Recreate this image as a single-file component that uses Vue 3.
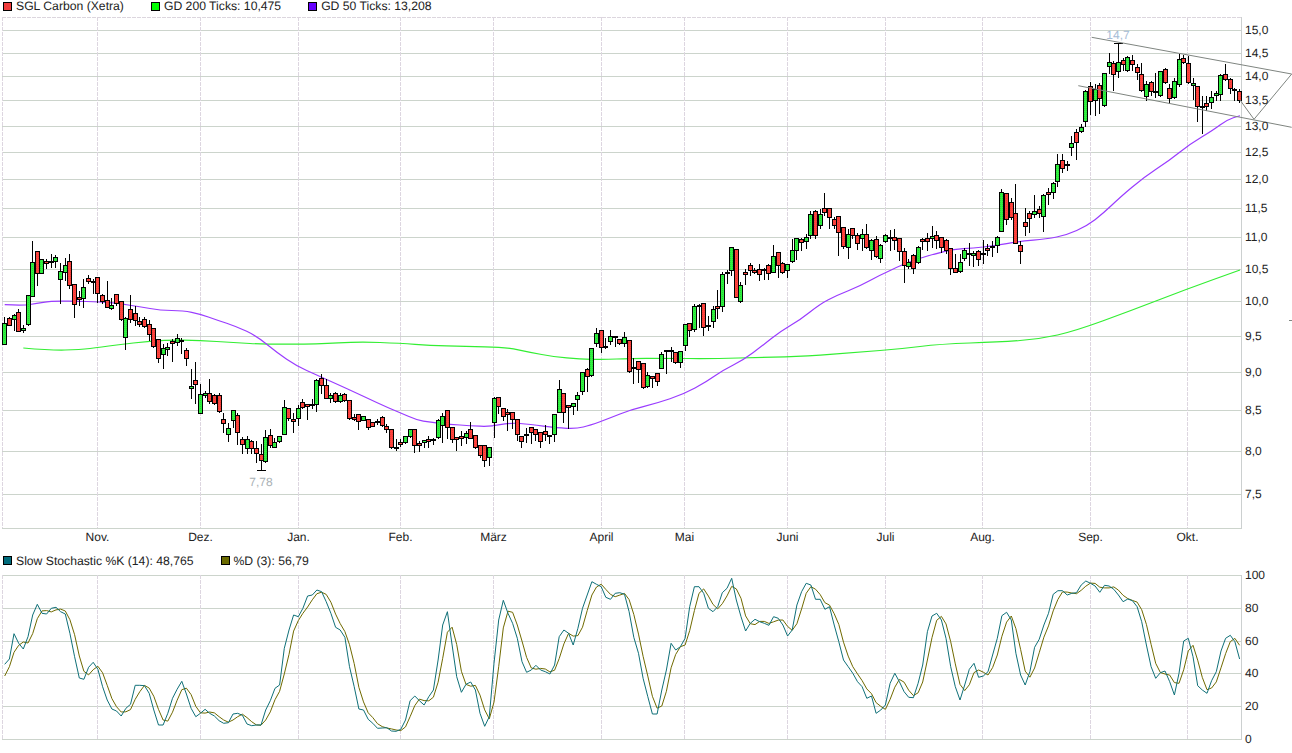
<template>
  <div class="page">
    <div class="legend">
      <span class="item"><i class="box red"></i>SGL Carbon (Xetra)</span>
      <span class="item"><i class="box lime"></i>GD 200 Ticks: 10,475</span>
      <span class="item"><i class="box violet"></i>GD 50 Ticks: 13,208</span>
    </div>

    <svg class="chart" width="1292" height="541" viewBox="0 12 1292 541">
      <defs>
        <pattern id="redDots" width="2" height="2" patternUnits="userSpaceOnUse">
          <rect width="2" height="2" fill="#ff423c" />
          <rect width="1" height="1" fill="#e63c38" />
        </pattern>
        <pattern id="greenDots" width="2" height="2" patternUnits="userSpaceOnUse">
          <rect width="2" height="2" fill="#30f040" />
          <rect width="1" height="1" fill="#28d636" />
        </pattern>
      </defs>
      <g class="grid">
        <line v-for="y in priceRows" :key="y" x1="2" :x2="axisX" :y1="y + 0.5" :y2="y + 0.5" />
        <line x1="2" :x2="axisX" y1="528.5" y2="528.5" />
      </g>
      <line class="top-edge" x1="2" :x2="axisX" y1="17.5" y2="17.5" />
      <g class="grid-v">
        <line x1="2.5" x2="2.5" y1="17" y2="528" />
        <line v-for="m in months" :key="m.label" :x1="m.x + 0.5" :x2="m.x + 0.5" y1="17" y2="528" />
      </g>
      <line class="axis" :x1="axisX + 0.5" :x2="axisX + 0.5" y1="17" y2="529" />

      <path class="ma200" :d="ma200" />
      <path class="ma50" :d="ma50" />

      <g v-for="c in candles" :key="c.i">
        <line class="wick" :x1="c.x" :x2="c.x" :y1="c.high" :y2="c.low" />
        <rect :class="c.up ? 'up' : 'down'" :x="c.x - 2" :y="c.top" width="4" :height="c.h" />
      </g>
      <line class="wick" x1="1114" x2="1123" y1="43.5" y2="43.5" />
      <line class="wick" x1="257" x2="266" y1="470.5" y2="470.5" />

      <polyline class="trend" points="1091.7,37.3 1291.7,74 1254,119.3 1240,100" />
      <line class="trend" x1="1078.3" y1="85.7" x2="1291.7" y2="127.3" />
      <line class="trend" x1="1289" y1="320.5" x2="1292" y2="320.5" />

      <text class="extreme grey" x="261" y="486" text-anchor="middle">7,78</text>
      <text class="extreme blue" x="1118" y="39" text-anchor="middle">14,7</text>

      <text v-for="p in priceLabels" :key="p.label" class="tick" x="1245" :y="p.y + 4">{{ p.label }}</text>
      <text v-for="m in months" :key="m.label" class="tick" :x="m.x + 0.5" y="541" text-anchor="middle">{{ m.label }}</text>
    </svg>

    <div class="legend lower">
      <span class="item"><i class="box teal"></i>Slow Stochastic %K (14): 48,765</span>
      <span class="item"><i class="box olive"></i>%D (3): 56,79</span>
    </div>

    <svg class="chart" width="1292" height="185" viewBox="0 568 1292 185">
      <g class="grid">
        <line v-for="s in stochLabels" :key="s.label" x1="2" :x2="axisX" :y1="s.y + 0.5" :y2="s.y + 0.5" />
      </g>
      <g class="grid-v">
        <line x1="2.5" x2="2.5" y1="575" y2="739" />
        <line v-for="m in months" :key="m.label" :x1="m.x + 0.5" :x2="m.x + 0.5" y1="575" y2="739" />
      </g>
      <line class="axis" :x1="axisX + 0.5" :x2="axisX + 0.5" y1="575" y2="740" />
      <polyline class="slow-d" :points="lineD" />
      <polyline class="slow-k" :points="lineK" />
      <text v-for="s in stochLabels" :key="s.label" class="tick" x="1245" :y="s.y + 4">{{ s.label }}</text>
    </svg>
  </div>
</template>

<script setup>
const axisX = 1241;
const candleX = (i) => 4.7 + 4.66 * i;

const months = [
  { label: "Nov.", x: 97 },
  { label: "Dez.", x: 200 },
  { label: "Jan.", x: 298 },
  { label: "Feb.", x: 400 },
  { label: "März", x: 493 },
  { label: "April", x: 601 },
  { label: "Mai", x: 684 },
  { label: "Juni", x: 787 },
  { label: "Juli", x: 885 },
  { label: "Aug.", x: 982 },
  { label: "Sep.", x: 1090 },
  { label: "Okt.", x: 1187 },
];

const priceLabels = [
  ["15,0", 30], ["14,5", 53], ["14,0", 76], ["13,5", 100], ["13,0", 126], ["12,5", 152],
  ["12,0", 179], ["11,5", 208], ["11,0", 237], ["10,5", 269], ["10,0", 301], ["9,5", 336],
  ["9,0", 372], ["8,5", 410], ["8,0", 451], ["7,5", 494],
].map(([label, y]) => ({ label, y }));
const priceRows = priceLabels.map((p) => p.y);

const stochLabels = [
  ["100", 575], ["80", 608], ["60", 641], ["40", 673], ["20", 706], ["0", 739],
].map(([label, y]) => ({ label, y }));

// candles: up, high, top, bottom, low - y values read off the 3x crops, so each block has its own offset
const blocks = [
  { off: 230, rows: [
    [1,258,278,343,343],[0,258,263,284,286],[1,250,256,268,300],[0,235,247,302,304],[1,282,295,301,305],
    [1,192,196,281,284],[1,30,97,199,199],[0,64,64,130,165],[1,85,88,130,130],[0,85,92,100,115],
    [0,70,92,96,110],[1,72,82,94,110],[1,95,124,146,218],[1,82,106,127,150],[0,70,92,166,175],
    [0,160,163,223,260],[0,180,202,208,225],[1,145,172,203,232],[0,132,145,154,158],[0,145,153,157,190],
    [0,140,142,190,215],[0,190,194,212,220],[0,150,211,232,232],[1,200,226,235,236],[0,192,193,218,225],
    [0,212,214,268,270],[1,258,263,322,357],[0,192,236,268,275],[0,225,250,269,285],[0,258,272,283,287],
    [0,258,268,289,292],[0,268,283,311,330],[0,290,295,349,352],[0,325,328,385,395],[1,340,355,373,413],
    [1,335,350,358,375],[0,325,332,340,392],[1,310,323,337,345],[1,320,329,334,370],[0,350,361,385,405],
    [1,415,469,475,503],[0,393,449,461,520],[1,460,493,550,550],[1,480,490,496,500],[0,445,488,514,518],
    [0,490,496,520,522],[0,485,496,544,546],[0,545,568,580,607],[1,575,595,613,632],[1,540,541,570,590],
    [0,546,555,607,642],[0,618,628,642,668],[1,615,628,655,670],[0,628,634,654,668],[0,630,654,670,697],
    [0,640,673,689,721],[1,597,620,694,695],[0,595,616,645,652],[1,620,637,650,650],[1,617,619,634,635],
    [1,507,532,613,613],[0,533,535,565,570],[0,545,568,574,605],[1,523,535,565,585],[0,503,517,532,535],
    [0,518,523,528,567],[0,505,521,524,535],[1,445,451,523,542],[0,430,445,466,488],[0,445,466,503,503],
    [1,485,494,505,515],[0,483,490,512,517],[1,487,494,513,515],[0,485,493,511,512],[0,510,511,565,567],
    [0,550,562,566,570],[0,550,553,573,597],[1,558,559,569,570],[0,565,568,590,596],[0,572,577,587,588],
    [0,563,572,577,582],[0,556,561,586,588],[0,578,587,598,605],[0,598,598,652,655],[0,625,650,652,660],
    [0,625,637,643,648],[1,617,619,637,640],[1,595,598,619,620],[0,597,597,646,665],[0,630,640,646,662],
    [1,628,629,637,650],[0,615,628,633,650],
    [0,622,627,629,643],[1,565,569,620,625],[1,545,559,586,636],[0,538,541,590,625],[0,590,592,628,636],
    [0,622,622,627,660],[0,600,619,625,645],[1,600,610,620,640],[0,574,598,623,625],[0,615,616,650,653],
    [0,643,645,674,680],[0,643,644,689,708],[1,650,652,682,705],[1,498,505,577,620],[0,498,502,527,550],
    [0,533,535,557,570],[0,535,547,552,600],[0,545,547,568,595],[0,567,568,613,630],[0,617,619,632,650],
    [0,590,612,614,637],[0,588,590,605,640],[0,595,598,612,630],[0,605,607,632,650],[0,583,604,613,630],
    [0,612,616,619,640],[1,552,553,613,632],[1,448,478,545,546],[0,488,490,545,575],[0,524,526,531,595],
    [1,518,519,529,553],[1,482,496,508,540],[1,425,427,482,492],[0,410,416,439,484],[1,354,355,436,437],
    [1,292,310,340,348],[0,300,301,352,365],[0,320,347,350,353],[1,297,319,334,342],[0,318,318,320,348],
    [0,325,328,340,342],[1,303,322,340,347],[0,330,331,422,425],[0,380,411,413,460],[0,392,394,418,455],
    [0,399,400,472,473],[1,423,436,467,472],[0,435,439,444,470],[0,429,430,454,465],[1,362,373,413,415],
    [0,360,361,364,428],[0,348,361,364,393],[0,365,367,397,400],[1,360,364,395,410],[1,278,283,346,360],
    [0,278,280,301,318],[1,220,229,298,302],[0,218,224,227,290],[0,219,220,292,314],[0,255,284,287,300],
    [1,225,238,272,290],[0,178,229,233,265],[1,122,133,227,242],[0,118,125,128,158],[1,51,52,119,135],
    [0,56,58,200,200],[1,153,166,214,215],[0,115,127,131,163],[0,97,106,119,135],[0,110,119,127,130],
    [0,100,116,131,150],[0,112,118,121,146],[0,100,106,130,147],[1,43,79,127,127],[0,67,67,106,142],
    [0,93,100,127,130],[1,98,103,119,140],[1,25,61,94,97],[1,20,25,61,88],[0,20,28,37,60],
    [1,10,22,34,55],[1,-60,-47,15,23],[0,-63,-56,15,23],[1,-65,-49,-14,-7],[0,-115,-65,-55,-45],
    [0,-67,-65,-38,-5],[0,-43,-32,-14,-5],[0,-45,-43,5,75],[0,-10,-8,49,55],[1,-5,13,52,83],
    [0,-5,-5,16,25],[0,5,16,40,58],
  ] },
  { off: 20, rows: [
    [1,625,643,655,690],[0,610,643,680,685],[1,655,661,690,718],[0,645,658,708,712],[1,670,676,714,725],
    [1,640,644,663,665],[0,627,652,655,690],[0,625,650,660,688],[0,652,653,694,720],[0,680,692,735,785],
    [1,715,725,737,745],[0,700,706,745,758],[1,676,682,726,728],[0,650,658,664,688],[0,635,654,664,690],
    [1,615,648,653,680],[0,630,644,660,685],[0,650,652,682,695],[0,655,661,690,700],[0,683,685,745,762],
    [0,700,743,755,757],[1,700,727,752,755],[1,680,691,715,720],[0,665,698,702,735],[1,690,698,706,738],
    [0,688,694,718,735],[1,658,698,703,730],[0,668,685,689,705],[0,660,679,682,708],[1,645,652,674,695],
    [1,503,517,634,634],[0,518,520,597,612],[0,530,547,590,598],[0,490,580,669,670],[0,660,676,694,728],
    [0,560,606,617,645],[0,570,580,595,637],[1,522,572,583,590],[0,555,566,580,590],[1,520,526,589,632],
    [0,500,517,523,552],[1,482,490,517,535],[1,400,431,484,497],[0,400,421,443,455],[0,420,433,436,450],
    [1,345,370,382,405],[0,325,335,367,417],[1,310,320,332,335],[1,208,212,304,318],[0,184,199,243,283],
    [1,190,206,241,285],[0,187,196,233,278],[1,155,160,256,258],[1,96,127,137,160],[0,120,128,163,210],
    [1,70,127,152,172],[0,110,121,132,150],[1,105,112,151,152],[0,103,121,133,150],[0,130,142,157,178],
    [0,126,163,211,214],[1,180,191,228,240],[0,180,187,213,225],[0,155,213,217,230],[1,150,152,226,228],
    [0,140,148,186,188],[0,190,203,233,250],[1,170,184,232,233],[1,100,118,193,197],[0,103,115,127,130],
    [0,105,130,187,188],[1,172,190,196,236],[0,197,199,259,303],[1,225,258,262,338],[0,225,248,259,270],
    [1,210,232,245,263],[1,210,220,226,240],[1,160,166,223,240],[0,130,163,176,180],[0,170,176,205,218],
    [0,200,206,208,240],[0,205,212,241,245],
  ] },
];

const candles = [];
for (const block of blocks) {
  for (const [up, high, top, bottom, low] of block.rows) {
    const i = candles.length;
    const px = (v) => Math.round(block.off + v / 3) + 0.5;
    candles.push({
      i,
      up,
      x: Math.floor(candleX(i)) + 0.5,
      high: px(high),
      low: px(low),
      top: px(top),
      h: Math.max(px(bottom) - px(top), 1),
    });
  }
}

// curves traced from the crops: [offset x, offset y, [zoomX, zoomY]...]
const trace = (parts) =>
  parts.flatMap(([ox, oy, pts]) => pts.map(([x, y]) => [ox + x / 3, oy + y / 3]));

// round the corners of a traced curve, going through the midpoints
const smooth = (pts) => {
  const f = (n) => n.toFixed(1);
  let d = `M${f(pts[0][0])} ${f(pts[0][1])}`;
  for (let i = 1; i < pts.length - 1; i++) {
    const mx = (pts[i][0] + pts[i + 1][0]) / 2;
    const my = (pts[i][1] + pts[i + 1][1]) / 2;
    d += `Q${f(pts[i][0])} ${f(pts[i][1])} ${f(mx)} ${f(my)}`;
  }
  const last = pts[pts.length - 1];
  return d + `L${f(last[0])} ${f(last[1])}`;
};

const ma50 = smooth(trace([
  [0, 230, [[14,224],[70,227],[110,220],[150,214],[220,213],[300,216],[350,220],[420,230],[480,241],[550,242],[600,252],[650,270],[710,290],[770,318],[830,367],[890,408],[950,435],[1050,480],[1130,518],[1200,548],[1250,570],[1290,577]]],
  [430, 230, [[60,583],[120,587],[180,590],[240,578],[300,583],[380,594],[440,596],[480,586],[540,564],[600,540],[680,520],[760,493],[830,455],[880,420],[940,390],[1000,345],[1050,305],[1110,270],[1170,222],[1220,196],[1290,168]]],
  [860, 20, [[60,765],[130,733],[170,718],[230,700],[280,688],[340,684],[400,678],[480,664],[560,657],[620,645],[680,618],[730,580],[780,532],[850,473],[930,420],[990,372],[1060,330],[1100,300],[1140,287]]],
]));

const ma200 = smooth(trace([
  [0, 230, [[70,354],[150,361],[240,359],[300,352],[400,338],[500,330],[600,331],[700,338],[800,343],[950,342],[1080,335],[1200,340],[1290,346]]],
  [430, 230, [[100,349],[230,352],[300,367],[370,380],[450,387],[520,389],[600,385],[700,385],[850,386],[1000,382],[1130,379],[1290,366]]],
  [0, 0, [[2700,1047],[2820,1032],[3000,1026],[3120,1017],[3225,993],[3390,933],[3561,867],[3720,810]]],
]));

// %K per candle, y in the 3x crop of the lower panel
const slowK = [
  343,327,251,280,297,260,195,163,190,192,
  175,172,185,192,250,320,384,388,352,337,
  358,410,450,477,483,498,475,463,406,406,
  407,430,480,525,525,490,445,418,394,432,
  475,500,490,478,490,498,512,520,518,492,
  490,496,522,527,525,525,480,452,415,405,
  295,240,195,200,175,138,135,120,125,155,
  190,232,240,262,350,410,477,480,508,520,
  535,534,533,543,544,538,510,452,438,452,
  465,440,
  420,330,225,185,285,380,427,403,396,420,
  490,529,500,340,210,151,190,220,265,335,
  367,360,346,360,365,372,345,260,240,250,
  285,235,175,135,95,103,110,142,148,130,
  128,133,185,262,310,385,440,492,492,420,
  360,280,300,290,265,170,110,110,130,175,
  185,170,128,115,85,150,200,243,220,208,
  215,220,226,200,205,225,258,240,165,125,
  100,105,148,148,178,170,225,275,330,350,
  370,395,
  410,445,438,490,480,465,400,370,395,425,
  442,443,400,345,245,198,190,210,265,350,
  410,450,405,358,340,382,378,365,315,265,
  197,187,210,310,375,405,365,292,268,225,
  190,133,122,122,135,130,128,105,93,100,
  108,127,106,108,118,135,155,147,152,170,
  215,285,350,385,368,363,395,435,370,273,
  265,320,407,420,430,392,365,303,265,256,
  275,327,
];

// %D is the 3 day average of %K
const slowD = slowK.map((v, i) => {
  if (i === 0) return 378;
  if (i === 1) return 350;
  return (v + slowK[i - 1] + slowK[i - 2]) / 3;
});

const toLine = (vals) =>
  vals.map((v, i) => `${candleX(i).toFixed(1)},${(550 + v / 3).toFixed(1)}`).join(" ");
const lineK = toLine(slowK);
const lineD = toLine(slowD);
</script>

<style scoped>
.page {
  width: 1292px;
  height: 753px;
  overflow: hidden;
  background: #fff;
  font-family: "Liberation Sans", Arial, sans-serif;
  color: #222;
  text-rendering: geometricPrecision;
}
.legend {
  display: flex;
  align-items: center;
  gap: 27px;
  height: 12px;
  padding-left: 3px;
  font-size: 12.2px;
  white-space: nowrap;
}
.lower {
  height: 15px;
}
.item {
  display: flex;
  align-items: center;
  gap: 4px;
}
.box {
  display: block;
  width: 7px;
  height: 7px;
  border: 1px solid #000;
}
.red { background: #f03c3c; }
.lime { background: #00ff00; }
.violet { background: #6600ff; }
.teal { background: #006b7b; }
.olive { background: #6b6b00; }

.chart {
  display: block;
}
.grid line {
  stroke: #ccd4cc;
  stroke-width: 1;
  shape-rendering: crispEdges;
}
.top-edge {
  stroke: #dcd6de;
  stroke-dasharray: 4 1;
  shape-rendering: crispEdges;
}
.grid-v line {
  stroke: #ddd6e0;
  stroke-dasharray: 4 1;
  shape-rendering: crispEdges;
}
.axis {
  stroke: #ccd0d0;
  shape-rendering: crispEdges;
}
polyline,
path {
  fill: none;
}
.ma50 {
  stroke: #9a3cff;
  stroke-width: 1.2;
}
.ma200 {
  stroke: #33ee33;
  stroke-width: 1.2;
}
.wick {
  stroke: #000;
  stroke-width: 1;
  shape-rendering: crispEdges;
}
.up,
.down {
  stroke: #000;
  stroke-width: 1;
  shape-rendering: crispEdges;
}
.up { fill: url(#greenDots); }
.down { fill: url(#redDots); }
.trend {
  fill: none;
  stroke: #7f8580;
  stroke-width: 1;
}
.slow-k {
  stroke: #0f7078;
  stroke-width: 1;
}
.slow-d {
  stroke: #706a00;
  stroke-width: 1;
}
.tick {
  font-size: 12px;
  fill: #222;
}
.extreme {
  font-size: 12px;
}
.grey { fill: #a9b0b4; }
.blue { fill: #a6bcd6; }
</style>
